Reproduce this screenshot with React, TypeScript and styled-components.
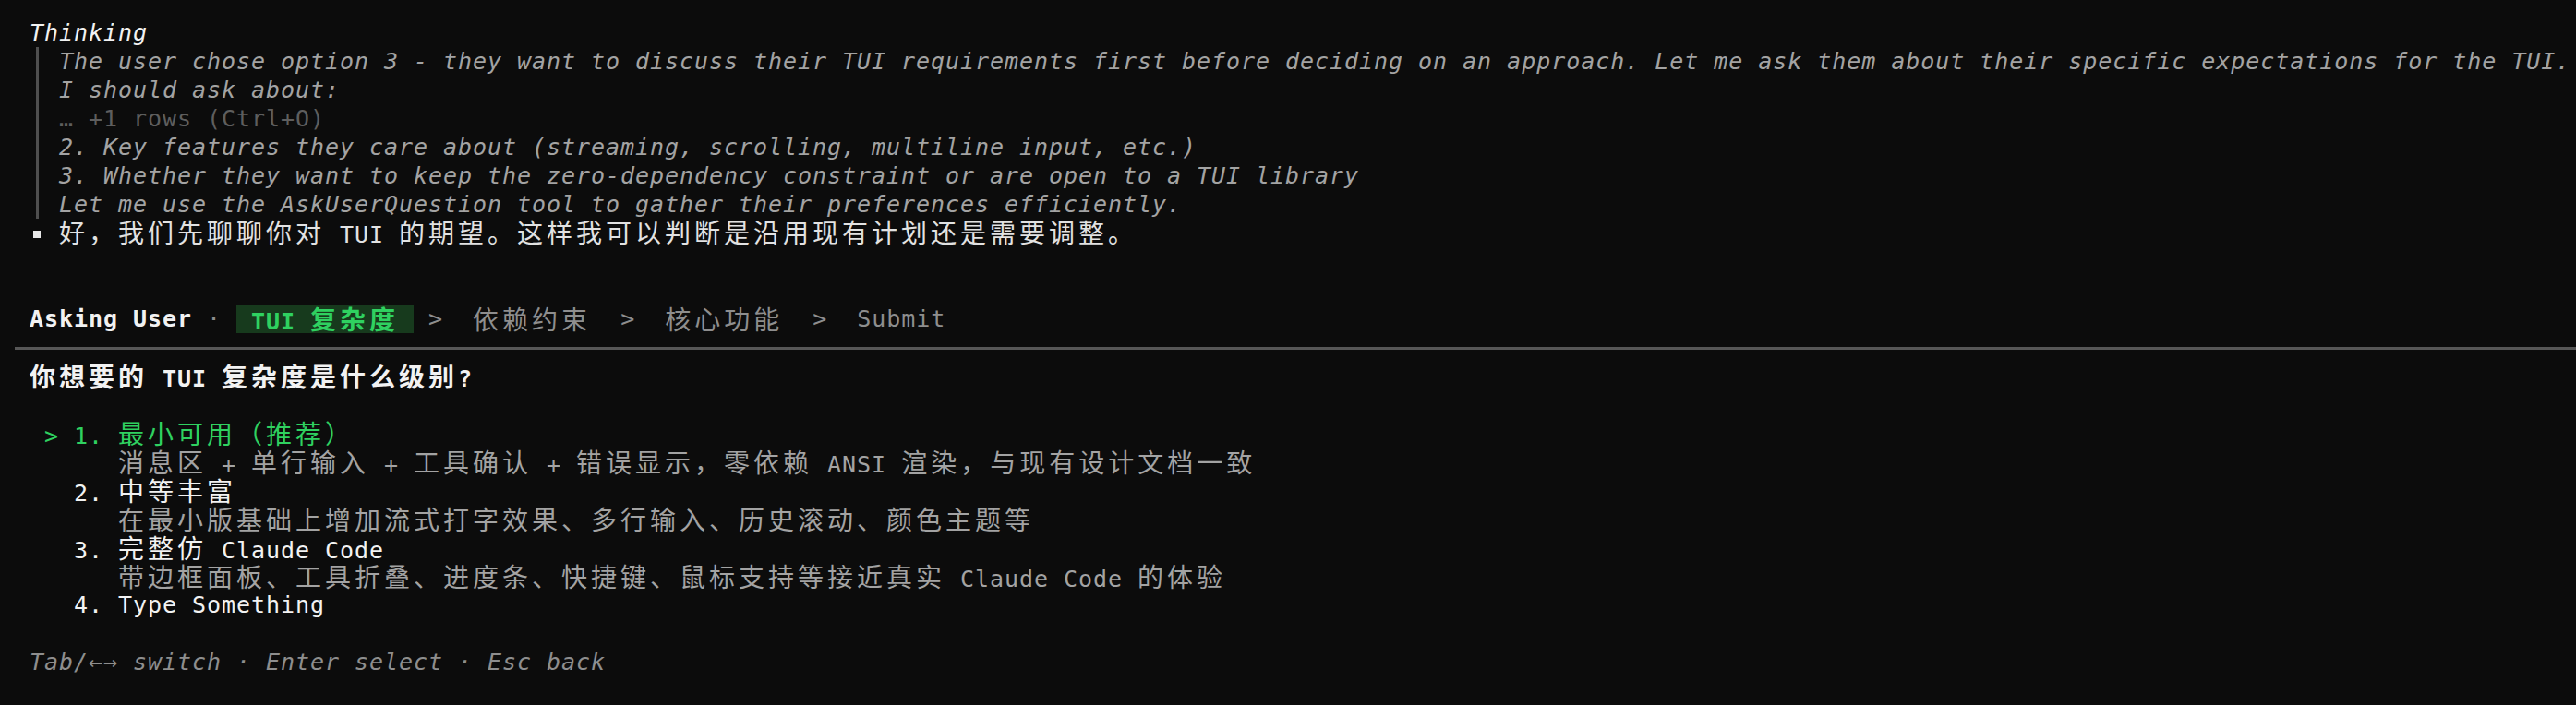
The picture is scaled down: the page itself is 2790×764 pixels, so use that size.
import React from 'react';
import styled, { createGlobalStyle, css } from 'styled-components';

const GlobalStyle = createGlobalStyle`
  html, body {
    margin: 0;
    padding: 0;
    background: #0c0c0c;
  }
  body {
    width: 2790px;
    height: 764px;
    overflow: hidden;
  }
`;

type Tone = 'bright' | 'text' | 'muted' | 'dim' | 'green' | 'hint';

const toneColor: Record<Tone, string> = {
  bright: '#f2f2f2',
  text: '#e2e2e2',
  muted: '#a3a3a3',
  dim: '#5e5e5e',
  green: '#2fd160',
  hint: '#8e8e8e',
};

const Screen = styled.div`
  box-sizing: border-box;
  width: 2790px;
  height: 764px;
  padding-top: 20px;
  background: #0c0c0c;
  color: #e2e2e2;
  font-family: "DejaVu Sans Mono", "Liberation Mono", monospace;
  font-size: 25px;
  letter-spacing: 0.95px;
  font-variant-ligatures: none;
  display: flex;
  flex-direction: column;
`;

const Line = styled.div<{ $indent?: number; $tone?: Tone; $italic?: boolean; $bold?: boolean }>`
  height: 31px;
  line-height: 31px;
  white-space: pre;
  padding-left: ${(p) => (p.$indent ?? 0) * 16}px;
  color: ${(p) => toneColor[p.$tone ?? 'text']};
  font-style: ${(p) => (p.$italic ? 'italic' : 'normal')};
  font-weight: ${(p) => (p.$bold ? 700 : 400)};
`;

const Blank = styled.div<{ $rows: number }>`
  height: ${(p) => p.$rows * 31}px;
`;

const Wide = styled.span`
  font-family: "Noto Sans CJK SC", "Noto Sans CJK JP", sans-serif;
  font-size: 28px;
  letter-spacing: 4px;
  font-style: normal;
`;

const ThinkBody = styled.div`
  margin-left: 39px;
  border-left: 3px solid #4f4f4f;
  padding-left: 22px;
  display: flex;
  flex-direction: column;
`;

const BulletRow = styled.div`
  height: 31px;
  line-height: 31px;
  white-space: pre;
  padding-left: 36px;
  display: flex;
  align-items: center;
  color: #e2e2e2;
`;

const Bullet = styled.span`
  display: inline-block;
  width: 8px;
  height: 8px;
  margin-top: 3px;
  margin-right: 20px;
  background: #e8e8e8;
  flex: none;
`;

const Header = styled.div`
  height: 31px;
  line-height: 31px;
  white-space: pre;
  padding-left: 32px;
  display: flex;
  align-items: stretch;
  color: #8e8e8e;
`;

const Title = styled.span`
  color: #f2f2f2;
  font-weight: 700;
`;

const Sep = styled.span`
  color: #8e8e8e;
`;

const Tab = styled.span<{ $active?: boolean }>`
  display: inline-block;
  height: 31px;
  color: #8e8e8e;
  ${(p) =>
    p.$active &&
    css`
      background: #173a1d;
      color: #2fd160;
      font-weight: 700;
    `}
`;

const Rule = styled.div`
  height: 3px;
  margin: 15px 0 13px 16px;
  background: #575757;
`;

const WIDE_RE = /([\u1100-\u115F\u2E80-\uA4CF\uAC00-\uD7A3\uF900-\uFAFF\uFE30-\uFE4F\uFF00-\uFF60\uFFE0-\uFFE6]+)/;

function Mixed({ text }: { text: string }) {
  const parts = text.split(WIDE_RE);
  return (
    <>
      {parts.map((p, i) =>
        i % 2 === 1 ? <Wide key={i}>{p}</Wide> : p ? <React.Fragment key={i}>{p}</React.Fragment> : null,
      )}
    </>
  );
}

const thinking: { text: string; dim?: boolean }[] = [
  {
    text:
      'The user chose option 3 - they want to discuss their TUI requirements first before deciding on an approach. Let me ask them about their specific expectations for the TUI.',
  },
  { text: 'I should ask about:' },
  { text: '… +1 rows (Ctrl+O)', dim: true },
  { text: '2. Key features they care about (streaming, scrolling, multiline input, etc.)' },
  { text: '3. Whether they want to keep the zero-dependency constraint or are open to a TUI library' },
  { text: 'Let me use the AskUserQuestion tool to gather their preferences efficiently.' },
];

const tabs = ['TUI 复杂度', '依赖约束', '核心功能', 'Submit'];

const options: { label: string; desc?: string }[] = [
  {
    label: '最小可用（推荐）',
    desc: '消息区 + 单行输入 + 工具确认 + 错误显示，零依赖 ANSI 渲染，与现有设计文档一致',
  },
  { label: '中等丰富', desc: '在最小版基础上增加流式打字效果、多行输入、历史滚动、颜色主题等' },
  {
    label: '完整仿 Claude Code',
    desc: '带边框面板、工具折叠、进度条、快捷键、鼠标支持等接近真实 Claude Code 的体验',
  },
  { label: 'Type Something' },
];

const selected = 0;

export default function App() {
  return (
    <>
      <GlobalStyle />
      <Screen>
        <Line $indent={2} $tone="bright" $italic>
          Thinking
        </Line>
        <ThinkBody>
          {thinking.map((t, i) => (
            <Line key={i} $tone={t.dim ? 'dim' : 'muted'} $italic={!t.dim}>
              {t.text}
            </Line>
          ))}
        </ThinkBody>
        <BulletRow>
          <Bullet />
          <span>
            <Mixed text="好，我们先聊聊你对 TUI 的期望。这样我可以判断是沿用现有计划还是需要调整。" />
          </span>
        </BulletRow>
        <Blank $rows={2} />
        <Header>
          <Title>Asking User</Title>
          <Sep> · </Sep>
          {tabs.map((t, i) => (
            <React.Fragment key={t}>
              {i > 0 && <Sep> &gt; </Sep>}
              <Tab $active={i === 0}>
                <Mixed text={` ${t} `} />
              </Tab>
            </React.Fragment>
          ))}
        </Header>
        <Rule />
        <Line $indent={2} $tone="bright" $bold>
          <Mixed text="你想要的 TUI 复杂度是什么级别?" />
        </Line>
        <Blank $rows={1} />
        {options.map((o, i) => (
          <React.Fragment key={o.label}>
            <Line $indent={3} $tone={i === selected ? 'green' : 'bright'}>
              <Mixed text={`${i === selected ? '>' : ' '} ${i + 1}. ${o.label}`} />
            </Line>
            {o.desc && (
              <Line $indent={8} $tone="muted">
                <Mixed text={o.desc} />
              </Line>
            )}
          </React.Fragment>
        ))}
        <Blank $rows={1} />
        <Line $indent={2} $tone="hint" $italic>
          Tab/←→ switch · Enter select · Esc back
        </Line>
      </Screen>
    </>
  );
}
